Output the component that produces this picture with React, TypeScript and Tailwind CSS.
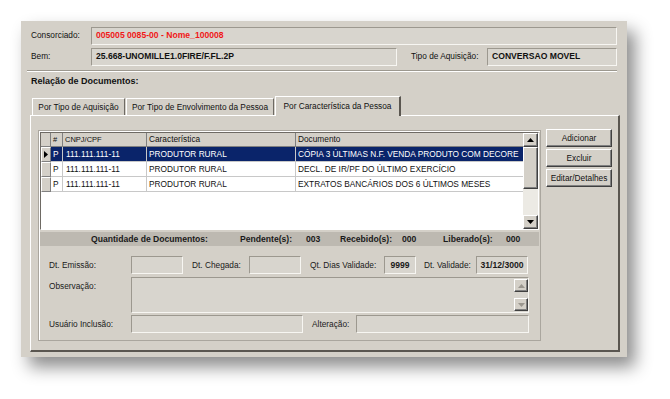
import React from 'react';

const font = { fontFamily: '"Liberation Sans", Arial, sans-serif' };

const Field = ({ className = '', children }: { className?: string; children?: React.ReactNode }) => (
    <div className={`h-[18px] flex items-center px-[4px] border border-t-[#9c988f] border-l-[#9c988f] border-b-[#f7f6f2] border-r-[#f7f6f2] bg-[#d8d5ce] font-bold text-[8.6px] ${className}`}>
        {children}
    </div>
);

const Button = ({ label }: { label: string }) => (
    <div className="w-[66px] h-[18px] flex items-center justify-center border border-t-white border-l-white border-b-[#404040] border-r-[#404040] shadow-[inset_-1px_-1px_0_#808080] bg-[#d4d0c8] text-[8.3px] text-[#111]">
        {label}
    </div>
);

const ScrollBtn = ({ up, small }: { up?: boolean; small?: boolean }) => (
    <div className={`${small ? 'w-[14px] h-[13px]' : 'w-[15px] h-[14px]'} flex items-center justify-center border border-t-white border-l-white border-b-[#404040] border-r-[#404040] shadow-[inset_-1px_-1px_0_#808080] bg-[#d4d0c8]`}>
        <svg width="7" height="4" viewBox="0 0 7 4">
            {up ? <polygon points="3.5,0 7,4 0,4" fill={small ? '#9a968e' : '#000'} /> : <polygon points="0,0 7,0 3.5,4" fill={small ? '#9a968e' : '#000'} />}
        </svg>
    </div>
);

const rows = [
    { doc: 'CÓPIA 3 ÚLTIMAS N.F. VENDA PRODUTO COM DECORE', selected: true },
    { doc: 'DECL. DE IR/PF DO ÚLTIMO EXERCÍCIO', selected: false },
    { doc: 'EXTRATOS BANCÁRIOS DOS 6 ÚLTIMOS MESES', selected: false },
];

export default function App() {
    return (
        <div className="min-h-screen bg-white pt-[21px] pl-[21px] text-[#111]" style={font}>
            <div className="w-[606px] h-[336px] bg-[#d4d0c8] shadow-[8px_10px_16px_rgba(0,0,0,0.45)] flex flex-col pt-[6px] px-[10px]">
                {/* Consorciado */}
                <div className="flex items-center h-[17px]">
                    <span className="w-[60px] text-[8.3px]">Consorciado:</span>
                    <Field className="flex-1 text-[#f01818]">005005 0085-00 - Nome_100008</Field>
                </div>
                {/* Bem */}
                <div className="flex items-center h-[17px] mt-[4px]">
                    <span className="w-[60px] text-[8.3px]">Bem:</span>
                    <Field className="w-[306px]">25.668-UNOMILLE1.0FIRE/F.FL.2P</Field>
                    <span className="w-[90px] pl-[14px] text-[8.3px]">Tipo de Aquisição:</span>
                    <Field className="w-[130px]">CONVERSAO MOVEL</Field>
                </div>
                <div className="mt-[5px] -ml-[4px] h-[2px] border-t border-t-[#9c988f] border-b border-b-white" />
                <div className="mt-[4px] h-[12px] flex items-center font-bold text-[9px]">Relação de Documentos:</div>

                {/* Tabs */}
                <div className="mt-[8px] h-[19px] flex items-end">
                    <div className="ml-[1px] w-[93px] h-[17px] flex items-center justify-center text-[8.3px] border-t border-t-white border-l border-l-white border-r border-r-[#6e6a64]">Por Tipo de Aquisição</div>
                    <div className="ml-[1px] w-[148px] h-[17px] flex items-center justify-center text-[8.3px] border-t border-t-white border-l border-l-white border-r border-r-[#6e6a64]">Por Tipo de Envolvimento da Pessoa</div>
                    <div className="ml-[1px] w-[126px] h-[20px] -mb-[1px] relative z-10 bg-[#d4d0c8] flex items-center justify-center text-[8.3px] border-t border-t-white border-l border-l-white border-r-2 border-r-[#5a5650]">Por Característica da Pessoa</div>
                </div>

                {/* Tab panel */}
                <div className="-ml-[1px] w-[590px] h-[237px] border-t border-t-white border-l border-l-white border-r-2 border-r-[#5a5650] border-b-2 border-b-[#5a5650] flex pt-[14px] pl-[7px]">
                    {/* inner panel */}
                    <div className="w-[503px] h-[211px] border border-[#aaa69e] shadow-[inset_1px_1px_0_white] p-[1px] flex flex-col">
                        {/* grid */}
                        <div className="h-[98px] flex border border-t-[#6e6a64] border-l-[#6e6a64] border-b-white border-r-white bg-white">
                            <div className="flex-1 flex flex-col text-[8.3px]">
                                <div className="flex h-[14px] bg-[#d4d0c8] border-b border-b-[#808080]">
                                    <div className="w-[10px] border-r border-r-[#808080]" />
                                    <div className="w-[12px] border-r border-r-[#808080] flex items-center pl-[2px] text-[7.5px]">#</div>
                                    <div className="w-[84px] border-r border-r-[#808080] flex items-center pl-[2px] text-[7.5px]">CNPJ/CPF</div>
                                    <div className="w-[149px] border-r border-r-[#808080] flex items-center pl-[2px]">Característica</div>
                                    <div className="flex-1 flex items-center pl-[2px]">Documento</div>
                                </div>
                                {rows.map((r, i) => (
                                    <div key={i} className="flex h-[15px]">
                                        <div className="w-[10px] bg-[#d4d0c8] border border-t-white border-l-white border-b-[#808080] border-r-[#808080] flex items-center justify-center">
                                            {r.selected && (
                                                <svg width="4" height="7" viewBox="0 0 4 7"><polygon points="0,0 4,3.5 0,7" fill="#000" /></svg>
                                            )}
                                        </div>
                                        <div className={`w-[12px] flex items-center pl-[2px] border-r border-b border-[#c8c8c8] ${r.selected ? 'bg-[#0a246a] text-white' : ''}`}>P</div>
                                        <div className={`w-[84px] flex items-center pl-[3px] border-r border-b border-[#c8c8c8] ${r.selected ? 'bg-[#0a246a] text-white' : ''}`}>111.111.111-11</div>
                                        <div className={`w-[149px] flex items-center pl-[2px] border-r border-b border-[#c8c8c8] ${r.selected ? 'bg-[#0a246a] text-white' : ''}`}>PRODUTOR RURAL</div>
                                        <div className={`flex-1 flex items-center pl-[2px] border-b border-[#c8c8c8] whitespace-nowrap overflow-hidden ${r.selected ? 'bg-[#0a246a] text-white' : ''}`}>{r.doc}</div>
                                    </div>
                                ))}
                            </div>
                            {/* scrollbar */}
                            <div className="w-[15px] flex flex-col bg-[#eceae4]">
                                <ScrollBtn up />
                                <div className="h-[42px] bg-[#d4d0c8] border border-t-white border-l-white border-b-[#404040] border-r-[#404040] shadow-[inset_-1px_-1px_0_#808080]" />
                                <div className="flex-1" />
                                <ScrollBtn />
                            </div>
                        </div>
                        {/* summary */}
                        <div className="mt-[2px] h-[14px] bg-[#bdb9b1] flex items-center font-bold text-[8.6px] text-[#1a1a1a] pl-[51px]">
                            <span className="w-[149px]">Quantidade de Documentos:</span>
                            <span className="w-[66px]">Pendente(s):</span>
                            <span className="w-[34px]">003</span>
                            <span className="w-[62px]">Recebido(s):</span>
                            <span className="w-[41px]">000</span>
                            <span className="w-[63px]">Liberado(s):</span>
                            <span>000</span>
                        </div>
                        {/* fields */}
                        <div className="flex flex-col pl-[9px] pt-[10px] text-[8.3px] text-[#1a1a1a]">
                            <div className="flex items-center">
                                <span className="w-[82px]">Dt. Emissão:</span>
                                <Field className="w-[52px]" />
                                <span className="w-[66px] pl-[9px]">Dt. Chegada:</span>
                                <Field className="w-[52px]" />
                                <span className="w-[83px] pl-[9px]">Qt. Dias Validade:</span>
                                <Field className="w-[32px] justify-center">9999</Field>
                                <span className="w-[60px] pl-[8px]">Dt. Validade:</span>
                                <Field className="w-[52px] justify-center">31/12/3000</Field>
                            </div>
                            <div className="flex mt-[3px]">
                                <span className="w-[82px] pt-[3px]">Observação:</span>
                                <div className="w-[398px] h-[36px] border border-t-[#9c988f] border-l-[#9c988f] border-b-[#f7f6f2] border-r-[#f7f6f2] bg-[#d8d5ce] flex justify-end">
                                    <div className="flex flex-col justify-between py-[1px]">
                                        <ScrollBtn up small />
                                        <ScrollBtn small />
                                    </div>
                                </div>
                            </div>
                            <div className="flex items-center mt-[2px]">
                                <span className="w-[82px]">Usuário Inclusão:</span>
                                <Field className="w-[172px]" />
                                <span className="w-[53px] pl-[9px]">Alteração:</span>
                                <Field className="w-[173px]" />
                            </div>
                        </div>
                    </div>
                    {/* buttons */}
                    <div className="ml-[5px] -mt-[1px] flex flex-col gap-[2px]">
                        <Button label="Adicionar" />
                        <Button label="Excluir" />
                        <Button label="Editar/Detalhes" />
                    </div>
                </div>
            </div>
        </div>
    );
}
